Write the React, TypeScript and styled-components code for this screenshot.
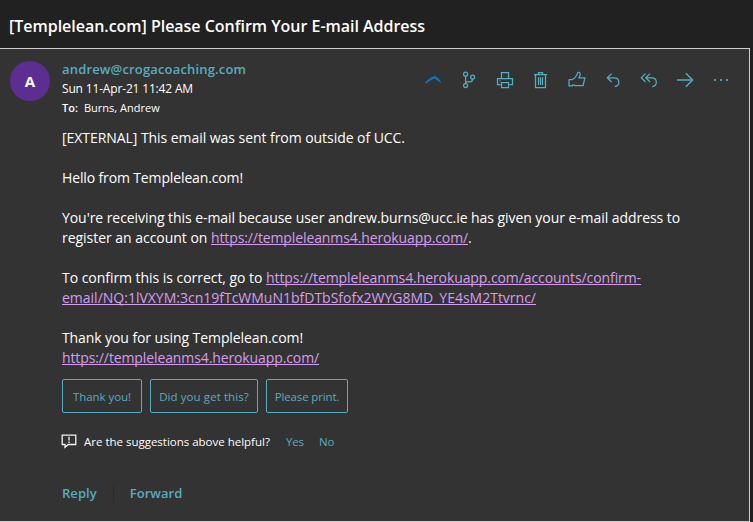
import React from "react";
import styled, { createGlobalStyle } from "styled-components";

const Global = createGlobalStyle`
  * { box-sizing: border-box; }
  body { margin: 0; background: #212121; color: #fff; font-family: "Open Sans", "Noto Sans", sans-serif; }
  button { font: inherit; background: none; border: 0; padding: 0; margin: 0; cursor: pointer; }
`;

const accent = "#56adbf";

const Page = styled.main`
  width: 753px;
  height: 522px;
  display: flex;
  flex-direction: column;
  overflow: hidden;
`;

const Subject = styled.h1`
  flex: 0 0 48px;
  margin: 0;
  padding: 4px 0 0 9px;
  font-size: 16px;
  font-weight: 600;
  line-height: 44px;
  letter-spacing: -0.025px;
  white-space: nowrap;
`;

const Card = styled.article`
  flex: 1;
  width: 750px;
  display: flex;
  flex-direction: column;
  border: solid #cfcfcf;
  border-width: 1px 1px 1px 0;
  background: #333;
`;

const Header = styled.header`
  display: flex;
  align-items: flex-start;
  padding: 11px 10px 0;
  height: 79px;
`;

const Avatar = styled.div`
  width: 40px;
  height: 40px;
  margin-top: 1px;
  border-radius: 50%;
  background: #5c2e91;
  font-size: 15px;
  font-weight: 700;
  line-height: 41px;
  text-align: center;
`;

const Sender = styled.div`
  flex: 1;
  margin-left: 12px;
`;

const Line = styled.div<{ $h: number; $size: number; $ls?: number }>`
  display: flex;
  height: ${(p) => p.$h}px;
  line-height: ${(p) => p.$h}px;
  font-size: ${(p) => p.$size}px;
  letter-spacing: ${(p) => p.$ls ?? 0}px;
  white-space: nowrap;
`;

const Address = styled.span`
  color: ${accent};
  font-weight: 600;
`;

const ToLabel = styled.span`
  width: 22px;
  font-weight: 600;
`;

const Toolbar = styled.nav`
  display: flex;
  margin-top: 2px;
`;

const Tool = styled.button`
  width: 36px;
  height: 36px;
  display: flex;
  align-items: center;
  justify-content: center;
  color: ${accent};
`;

const Glyph = styled.svg`
  width: 20px;
  height: 20px;
  fill: none;
  stroke: currentColor;
  stroke-width: 1.25;
`;

const Body = styled.section`
  display: flex;
  flex-direction: column;
  padding-left: 62px;
  font-size: 14px;
  line-height: 20px;
`;

const Paragraph = styled.p`
  margin: 0 0 20px;
  white-space: nowrap;
  &:last-child { margin-bottom: 0; }
`;

const Run = styled.span<{ $ls: number }>`
  letter-spacing: ${(p) => p.$ls}px;
`;

const Link = styled.a<{ $ls: number }>`
  color: #d59ded;
  letter-spacing: ${(p) => p.$ls}px;
  text-decoration: underline 1px;
  text-underline-offset: 1px;
  text-decoration-skip-ink: none;
`;

const Suggestions = styled.div`
  display: flex;
  gap: 8px;
  padding: 11px 0 0 62px;
`;

const Suggestion = styled.button<{ $w: number; $ls: number }>`
  && {
    width: ${(p) => p.$w}px;
    height: 34px;
    border: 1px solid ${accent};
    border-radius: 2px;
    color: ${accent};
    font-size: 11.5px;
    letter-spacing: ${(p) => p.$ls}px;
    white-space: nowrap;
  }
`;

const Feedback = styled.div`
  display: flex;
  align-items: center;
  height: 20px;
  margin-top: 18px;
  padding-left: 61px;
  font-size: 11.5px;
  white-space: nowrap;
`;

const FeedbackIcon = styled.svg`
  width: 16px;
  height: 16px;
  margin-right: 7px;
  fill: none;
  stroke: #f2f2f2;
  stroke-width: 1.3;
`;

const Question = styled.span`
  width: 202px;
  letter-spacing: -0.01px;
`;

const Answer = styled.button<{ $w: number }>`
  width: ${(p) => p.$w}px;
  color: ${accent};
  text-align: left;
  letter-spacing: -0.2px;
`;

const Actions = styled.footer`
  display: flex;
  align-items: center;
  height: 24px;
  margin-top: 30px;
  padding-left: 62px;
`;

const Action = styled.button`
  && {
    color: ${accent};
    font-size: 13px;
    font-weight: 600;
    letter-spacing: 0.05px;
  }
`;

const Divider = styled.i`
  width: 1px;
  height: 20px;
  margin: 0 16px;
  background: #2c2c2c;
`;

const tools: { label: string; art: React.ReactNode }[] = [
  { label: "Boomerang", art: <path d="M2 12.6 Q7 7.2 12.2 5.8 Q15.5 7.8 18.2 12 L17.4 12.8 L12 8.8 L9.6 9.2 L2.6 13.7Z" fill="#1272c0" stroke="none" /> },
  { label: "Branch", art: <><circle cx="6.6" cy="4.2" r="2" /><circle cx="13.6" cy="7" r="2" /><circle cx="6.6" cy="15.6" r="2" /><path d="M6.6 6.2v7.4M13.6 9c0 2-1 2.9-3 2.9h-4" /></> },
  { label: "Print", art: <path d="M6.5 8.5V2.5h7v6M5.5 14.5h-3v-6h15v6h-3M6.5 12.5h7v5h-7zM4.5 10.8h1" /> },
  { label: "Delete", art: <path d="M3 4.5h13M7.5 4.4V2.5h4v1.9M4.5 4.5v13h10v-13M7.5 7.2v7.8M9.5 7.2v7.8M11.5 7.2v7.8" /> },
  { label: "Like", art: <path d="M2 9.5h3.2c2.8-1.1 4.5-3.6 5.4-6.6.3-.9 2.6-.6 2.6 1.1 0 1.5-.7 2.6-1.2 3.9h5.9l-1.8 7.6H7.7L6 14.4M2 9.5v6.3h3.4l.8-1.3" /> },
  { label: "Reply", art: <path d="M8.6 3.6 4.3 7.8l4.3 4.2M4.5 7.8h6.7c2.8 0 4.6 1.8 4.6 4.3s-1.7 4.4-4.1 4.4" /> },
  { label: "Reply all", art: <path d="M6.5 3.6 2.3 7.8l4.2 4.2M11 3.6 6.8 7.8 11 12M7 7.8h5.6c2.9 0 4.7 1.8 4.7 4.3s-1.7 4.4-4.1 4.4" /> },
  { label: "Forward", art: <path d="M2 10h15.6M10.8 3.2l6.8 6.8-6.8 6.8" strokeWidth="1.4" /> },
  { label: "More", art: <path d="M3 9h2v2H3zM9 9h2v2H9zM15 9h2v2h-2z" fill="currentColor" stroke="none" opacity="0.85" /> },
];

export default function App() {
  return (
    <Page>
      <Global />
      <Subject>[Templelean.com] Please Confirm Your E-mail Address</Subject>
      <Card>
        <Header>
          <Avatar>A</Avatar>
          <Sender>
            <Line $h={19} $size={13} $ls={0.165}><Address>andrew@crogacoaching.com</Address></Line>
            <Line $h={20} $size={12} $ls={-0.165}>Sun 11-Apr-21 11:42 AM</Line>
            <Line $h={18} $size={11}><ToLabel>To:</ToLabel>Burns, Andrew</Line>
          </Sender>
          <Toolbar>
            {tools.map((t) => (
              <Tool key={t.label} aria-label={t.label}><Glyph viewBox="0 0 20 20">{t.art}</Glyph></Tool>
            ))}
          </Toolbar>
        </Header>
        <Body>
          <Paragraph><Run $ls={-0.052}>[EXTERNAL] This email was sent from outside of UCC.</Run></Paragraph>
          <Paragraph><Run $ls={-0.134}>Hello from Templelean.com!</Run></Paragraph>
          <Paragraph>
            <Run $ls={-0.063}>You're receiving this e-mail because user andrew.burns@ucc.ie has given your e-mail address to</Run><br />
            <Run $ls={-0.029}>register an account on </Run>
            <Link $ls={-0.109}>https://templeleanms4.herokuapp.com/</Link>.
          </Paragraph>
          <Paragraph>
            <Run $ls={-0.041}>To confirm this is correct, go to </Run>
            <Link $ls={-0.088}>https://templeleanms4.herokuapp.com/accounts/confirm-</Link><br />
            <Link $ls={-0.003}>email/NQ:1lVXYM:3cn19fTcWMuN1bfDTbSfofx2WYG8MD_YE4sM2Ttvrnc/</Link>
          </Paragraph>
          <Paragraph>
            <Run $ls={-0.09}>Thank you for using Templelean.com!</Run><br />
            <Link $ls={-0.109}>https://templeleanms4.herokuapp.com/</Link>
          </Paragraph>
        </Body>
        <Suggestions>
          <Suggestion $w={80} $ls={-0.05}>Thank you!</Suggestion>
          <Suggestion $w={108} $ls={0.08}>Did you get this?</Suggestion>
          <Suggestion $w={82} $ls={-0.15}>Please print.</Suggestion>
        </Suggestions>
        <Feedback>
          <FeedbackIcon viewBox="0 0 16 16"><path d="M1.2 2.2h13.6v9.3H7.2L4 14.3v-2.8H1.2zM8 3.8v3.6M8 8.6v1.3" /></FeedbackIcon>
          <Question>Are the suggestions above helpful?</Question>
          <Answer $w={33}>Yes</Answer>
          <Answer $w={20}>No</Answer>
        </Feedback>
        <Actions>
          <Action>Reply</Action>
          <Divider />
          <Action>Forward</Action>
        </Actions>
      </Card>
    </Page>
  );
}
